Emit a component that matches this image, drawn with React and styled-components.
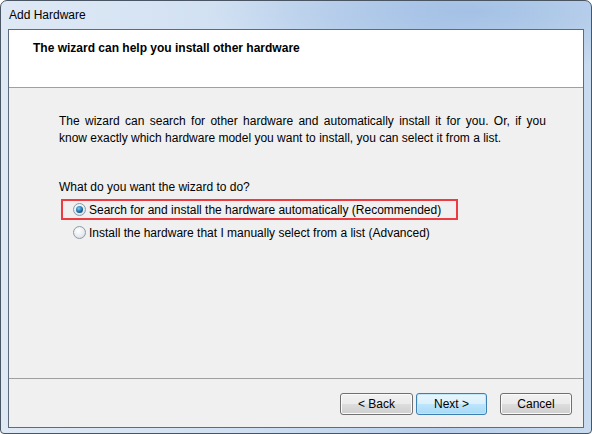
import styled, { createGlobalStyle } from 'styled-components';

const Global = createGlobalStyle`
  html, body { margin: 0; padding: 0; }
  body {
    width: 592px;
    height: 434px;
    overflow: hidden;
    background: #ffffff;
    font-family: "Liberation Sans", Arial, sans-serif;
    font-size: 12px;
    color: #000;
  }
`;

// ventana con marco tipo Aero
const Window = styled.div`
  box-sizing: border-box;
  width: 592px;
  height: 434px;
  display: flex;
  flex-direction: column;
  padding: 0 7px 5px 7px;
  border: 1px solid #4a5563;
  border-radius: 7px 7px 4px 4px;
  background:
    radial-gradient(ellipse 260px 60px at 470px 10px, rgba(160, 190, 228, 0.85), rgba(160, 190, 228, 0) 100%),
    linear-gradient(90deg, #dfe9f5 0%, #d0e0f2 40%, #b8cfeb 75%, #c8dbef 100%);
`;

const TitleBar = styled.div`
  height: 28px;
  display: flex;
  align-items: center;
  padding-left: 1px;
  font-size: 12px;
  color: #000;
`;

const Client = styled.div`
  flex: 1;
  display: flex;
  flex-direction: column;
  border: 1px solid #5d6b7b;
  background: #f0f0f0;
`;

const Header = styled.div`
  height: 58px;
  background: #ffffff;
  border-bottom: 1px solid #a0a0a0;
  padding: 11px 0 0 24px;
  box-sizing: border-box;
`;

const HeaderTitle = styled.div`
  font-weight: bold;
  font-size: 12px;
  line-height: 15px;
`;

const Body = styled.div`
  flex: 1;
  padding: 25px 20px 0 50px;
  display: flex;
  flex-direction: column;
`;

const Paragraph = styled.p`
  margin: 0;
  line-height: 17px;
  white-space: nowrap;
`;

const Line = styled.span`
  display: block;
  word-spacing: ${p => p.$spread || 0}px;
`;

const Question = styled.div`
  margin-top: 33px;
  line-height: 15px;
`;

const Options = styled.div`
  display: flex;
  flex-direction: column;
  margin-top: 4px;
  margin-left: 2px;
`;

const OptionRow = styled.label`
  display: flex;
  align-items: center;
  gap: 3px;
  height: 21px;
  padding-left: 10px;
  width: 397px;
  box-sizing: border-box;
  white-space: nowrap;
  border: 2px solid ${p => (p.$highlight ? '#ee3b41' : 'transparent')};
  margin-bottom: 2px;
`;

const Radio = styled.span`
  flex: none;
  box-sizing: border-box;
  width: 13px;
  height: 13px;
  border-radius: 50%;
  border: 1px solid #8e9aa8;
  background: radial-gradient(circle at 40% 35%, #ffffff 0%, #e6eaef 60%, #c9d0d8 100%);
  display: flex;
  align-items: center;
  justify-content: center;

  &::after {
    content: '';
    display: ${p => (p.$checked ? 'block' : 'none')};
    width: 7px;
    height: 7px;
    border-radius: 50%;
    background: radial-gradient(circle at 40% 35%, #7fd0f5 0%, #1a6aa8 55%, #0b2f52 100%);
  }
`;

const Separator = styled.div`
  height: 1px;
  background: #a0a0a0;
`;

const Footer = styled.div`
  height: 48px;
  display: flex;
  align-items: flex-start;
  justify-content: flex-end;
  padding: 14px 11px 0 0;
  box-sizing: border-box;
`;

const Button = styled.button`
  box-sizing: border-box;
  width: ${p => p.$w || 73}px;
  height: 22px;
  margin-left: ${p => p.$gap || 0}px;
  padding: 0;
  border-radius: 3px;
  font-family: inherit;
  font-size: 12px;
  color: #000;
  border: 1px solid ${p => (p.$default ? '#3c7fb1' : '#707070')};
  box-shadow: inset 0 0 0 1px ${p => (p.$default ? '#c0e6fb' : '#fbfbfb')};
  background: ${p =>
    p.$default
      ? 'linear-gradient(#eaf6fd 0%, #d9f0fc 50%, #bee6fd 50%, #a7d9f5 100%)'
      : 'linear-gradient(#f2f2f2 0%, #ebebeb 50%, #dddddd 50%, #cfcfcf 100%)'};
`;

export default function App() {
  return (
    <>
      <Global />
      <Window>
        <TitleBar>Add Hardware</TitleBar>
        <Client>
          <Header>
            <HeaderTitle>The wizard can help you install other hardware</HeaderTitle>
          </Header>
          <Body>
            <Paragraph>
              <Line $spread={2}>
                The wizard can search for other hardware and automatically install it for you. Or, if you
              </Line>
              <Line>know exactly which hardware model you want to install, you can select it from a list.</Line>
            </Paragraph>
            <Question>What do you want the wizard to do?</Question>
            <Options>
              <OptionRow $highlight>
                <Radio $checked />
                Search for and install the hardware automatically (Recommended)
              </OptionRow>
              <OptionRow>
                <Radio />
                Install the hardware that I manually select from a list (Advanced)
              </OptionRow>
            </Options>
          </Body>
          <Separator />
          <Footer>
            <Button>&lt; Back</Button>
            <Button $default $w={71} $gap={3}>Next &gt;</Button>
            <Button $w={72} $gap={13}>Cancel</Button>
          </Footer>
        </Client>
      </Window>
    </>
  );
}
